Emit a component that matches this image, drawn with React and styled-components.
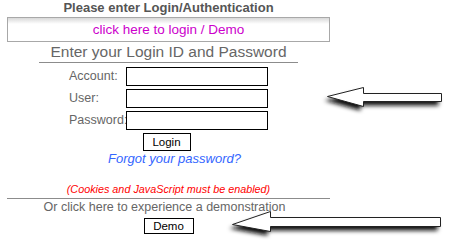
import React from "react";
import styled, { createGlobalStyle } from "styled-components";

const Global = createGlobalStyle`
  html, body { margin: 0; padding: 0; background: #fff; }
  body { width: 450px; height: 240px; overflow: hidden; position: relative; }
  * { box-sizing: border-box; }
`;

const Page = styled.div`
  position: relative;
  width: 450px;
  height: 240px;
  padding-left: 7px;
  font-family: "Liberation Sans", Arial, sans-serif;
  color: #666;
`;

const Column = styled.div`
  width: 323px;
  display: flex;
  flex-direction: column;
  align-items: center;
  text-align: center;
`;

const Title = styled.div`
  font-weight: bold;
  font-size: 13px;
  line-height: 16px;
  color: #555;
  height: 17px;
`;

const LinkBox = styled.a`
  display: block;
  width: 100%;
  height: 25px;
  border: 1px solid #a8a8a8;
  background: linear-gradient(to bottom, #d8d8d8 0px, #fff 6px);
  color: #cc00cc;
  font-size: 13.5px;
  line-height: 23px;
  text-decoration: none;
`;

const Subtitle = styled.div`
  width: 259px;
  font-size: 15.5px;
  line-height: 20px;
  height: 21px;
  border-bottom: 1px solid #8c8c8c;
  color: #666;
`;

const Form = styled.div`
  margin-top: 4px;
  display: grid;
  grid-template-columns: 57px 142px;
  row-gap: 3px;
  text-align: left;
`;

const Label = styled.label`
  font-size: 12.5px;
  line-height: 19px;
  color: #666;
  white-space: nowrap;
`;

const Input = styled.div`
  height: 19px;
  border: 1px solid #000;
  background: #fff;
`;

const Button = styled.div`
  margin-top: ${(p) => p.$mt}px;
  width: ${(p) => p.$w}px;
  height: ${(p) => p.$h}px;
  border: 1px solid #000;
  background: #fff;
  color: #000;
  font-size: 11.5px;
  line-height: ${(p) => p.$h - 2}px;
  text-align: center;
  margin-left: ${(p) => p.$ml || 0}px;
`;

const Forgot = styled.a`
  font-size: 13px;
  line-height: 16px;
  font-style: italic;
  color: #3366ff;
  text-decoration: none;
  margin-left: 12px;
`;

const Note = styled.div`
  margin-top: 15px;
  font-size: 10.8px;
  line-height: 14px;
  font-style: italic;
  color: #ff0000;
`;

const Rule = styled.div`
  margin-top: 2px;
  width: 100%;
  border-top: 1px solid #8c8c8c;
`;

const DemoText = styled.div`
  font-size: 12.5px;
  line-height: 16px;
  color: #666;
  margin-left: -8px;
`;

const Overlay = styled.svg`
  position: absolute;
  left: 0;
  top: 0;
  pointer-events: none;
`;

const Arrow = ({ points }) => (
  <g>
    <polygon points={points} fill="#111" filter="url(#shadow)" transform="translate(-3,4)" />
    <polygon points={points} fill="#fff" stroke="#222" strokeWidth="1" />
  </g>
);

export default function App() {
  return (
    <>
      <Global />
      <Page>
        <Column>
          <Title>Please enter Login/Authentication</Title>
          <LinkBox href="#">click here to login / Demo</LinkBox>
          <Subtitle>Enter your Login ID and Password</Subtitle>
          <Form>
            <Label>Account:</Label>
            <Input />
            <Label>User:</Label>
            <Input />
            <Label>Password:</Label>
            <Input />
          </Form>
          <Button $mt={3} $w={48} $h={18} $ml={-4}>Login</Button>
          <Forgot href="#">Forgot your password?</Forgot>
          <Note>(Cookies and JavaScript must be enabled)</Note>
          <Rule />
          <DemoText>Or click here to experience a demonstration</DemoText>
          <Button $mt={3} $w={50} $h={16}>Demo</Button>
        </Column>
        <Overlay width="450" height="240" viewBox="0 0 450 240">
          <defs>
            <filter id="shadow" x="-20%" y="-60%" width="140%" height="220%">
              <feGaussianBlur stdDeviation="2.2" />
            </filter>
          </defs>
          <Arrow points="327.5,96.5 363.5,87.5 363.5,93.5 441.5,93.5 441.5,101.5 363.5,101.5 363.5,106.5" />
          <Arrow points="232.5,224.5 270.5,211.5 270.5,217.5 440.5,217.5 440.5,226.5 270.5,226.5 270.5,231.5" />
        </Overlay>
      </Page>
    </>
  );
}
